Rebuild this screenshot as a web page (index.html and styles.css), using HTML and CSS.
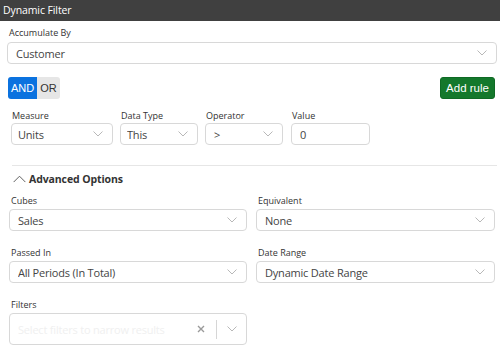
FILE: index.html
```html
<!DOCTYPE html>
<html lang="en">
<head>
    <meta charset="UTF-8">
    <title>Dynamic Filter</title>
    <link rel="stylesheet" href="styles.css">
</head>
<body>
    <div class="titlebar">Dynamic Filter</div>

    <div class="panel">
        <!-- Accumulate -->
        <div class="field">
            <label class="field-label">Accumulate By</label>
            <div class="select">
                <span>Customer</span>
                <svg class="chev" viewBox="0 0 10 6"><path d="M0.5 0.5 L5 5 L9.5 0.5"/></svg>
            </div>
        </div>

        <!-- Logic + add -->
        <div class="logic-row">
            <div class="toggle">
                <span class="toggle-btn active">AND</span>
                <span class="toggle-btn">OR</span>
            </div>
            <button class="add-btn">Add rule</button>
        </div>

        <!-- Rule -->
        <div class="rule-row">
            <div class="rule-field measure">
                <label class="field-label">Measure</label>
                <div class="select">
                    <span>Units</span>
                    <svg class="chev" viewBox="0 0 10 6"><path d="M0.5 0.5 L5 5 L9.5 0.5"/></svg>
                </div>
            </div>
            <div class="rule-field datatype">
                <label class="field-label">Data Type</label>
                <div class="select">
                    <span>This</span>
                    <svg class="chev" viewBox="0 0 10 6"><path d="M0.5 0.5 L5 5 L9.5 0.5"/></svg>
                </div>
            </div>
            <div class="rule-field operator">
                <label class="field-label">Operator</label>
                <div class="select">
                    <span>&gt;</span>
                    <svg class="chev" viewBox="0 0 10 6"><path d="M0.5 0.5 L5 5 L9.5 0.5"/></svg>
                </div>
            </div>
            <div class="rule-field value">
                <label class="field-label">Value</label>
                <div class="input">0</div>
            </div>
        </div>

        <hr class="divider">

        <div class="adv-title">
            <svg class="chev-up" viewBox="0 0 14 8"><path d="M0.7 7.3 L7 1 L13.3 7.3"/></svg>
            Advanced Options
        </div>

        <div class="adv-grid">
            <div class="field">
                <label class="field-label">Cubes</label>
                <div class="select">
                    <span>Sales</span>
                    <svg class="chev" viewBox="0 0 10 6"><path d="M0.5 0.5 L5 5 L9.5 0.5"/></svg>
                </div>
            </div>
            <div class="field">
                <label class="field-label">Equivalent</label>
                <div class="select">
                    <span>None</span>
                    <svg class="chev" viewBox="0 0 10 6"><path d="M0.5 0.5 L5 5 L9.5 0.5"/></svg>
                </div>
            </div>
            <div class="field">
                <label class="field-label">Passed In</label>
                <div class="select">
                    <span>All Periods (In Total)</span>
                    <svg class="chev" viewBox="0 0 10 6"><path d="M0.5 0.5 L5 5 L9.5 0.5"/></svg>
                </div>
            </div>
            <div class="field">
                <label class="field-label">Date Range</label>
                <div class="select">
                    <span>Dynamic Date Range</span>
                    <svg class="chev" viewBox="0 0 10 6"><path d="M0.5 0.5 L5 5 L9.5 0.5"/></svg>
                </div>
            </div>
            <div class="field">
                <label class="field-label">Filters</label>
                <div class="multi">
                    <span class="placeholder">Select filters to narrow results</span>
                    <svg class="clear" viewBox="0 0 8 8"><path d="M1 1 L7 7 M7 1 L1 7"/></svg>
                    <span class="sep"></span>
                    <svg class="chev" viewBox="0 0 10 6"><path d="M0.5 0.5 L5 5 L9.5 0.5"/></svg>
                </div>
            </div>
        </div>
    </div>
</body>
</html>
```

FILE: styles.css
```css
* {
    box-sizing: border-box;
    margin: 0;
    padding: 0;
}

body {
    font-family: 'Open Sans', sans-serif;
    background: #fff;
    color: #333;
    width: 500px;
    height: 351px;
    overflow: hidden;
}

.titlebar {
    height: 21px;
    line-height: 21px;
    background: #404040;
    color: #fff;
    font-size: 10.5px;
    padding-left: 3px;
    letter-spacing: -0.1px;
}

.panel {
    padding: 6px 3px 0 7px;
}

.field-label {
    display: block;
    font-size: 9px;
    line-height: 12px;
    color: #333;
    margin-bottom: 3px;
    padding-left: 2px;
}

.select,
.input,
.multi {
    display: flex;
    align-items: center;
    height: 22px;
    border: 1px solid #d8d8d8;
    border-radius: 4px;
    font-size: 11px;
    letter-spacing: -0.2px;
    color: #444;
    padding: 0 9px 0 8px;
    background: #fff;
}

.select span {
    flex: 1;
    white-space: nowrap;
    overflow: hidden;
}

.chev {
    width: 10px;
    height: 6px;
    fill: none;
    stroke: #b8b8b8;
    stroke-width: 1;
}

/* logic row */
.logic-row {
    display: flex;
    justify-content: space-between;
    align-items: center;
    margin-top: 13px;
    padding: 0 2px 0 1px;
}

.toggle {
    display: flex;
    height: 22px;
}

.toggle-btn {
    font-family: 'Liberation Sans', Arial, sans-serif;
    font-size: 11px;
    line-height: 22px;
    text-align: center;
    background: #e6e6e6;
    color: #333;
}

.toggle-btn.active {
    background: #0b72df;
    color: #fff;
    border-radius: 3px 0 0 3px;
    width: 29px;
}

.toggle-btn:last-child {
    border-radius: 0 3px 3px 0;
    width: 23px;
}

.add-btn {
    font-family: 'Liberation Sans', Arial, sans-serif;
    font-size: 11.5px;
    height: 22px;
    width: 55px;
    border: 1px solid #0f6a24;
    border-radius: 3px;
    background: #14782c;
    color: #fff;
}

/* rule row */
.rule-row {
    display: flex;
    gap: 7px;
    margin-top: 11px;
    padding-left: 4px;
}

.rule-field .field-label {
    margin-bottom: 1px;
    padding-left: 1px;
}

.rule-field .select {
    padding: 0 9px 0 6px;
}

.measure { width: 102px; }
.datatype { width: 78px; }
.operator { width: 78px; }
.operator .select { padding-left: 8px; }
.value { width: 79px; margin-left: 1px; }

.input {
    padding-left: 8px;
}

.divider {
    border: none;
    border-top: 1px solid #e6e6e6;
    margin: 20px 0 0 5px;
}

.adv-title {
    display: flex;
    align-items: center;
    gap: 3px;
    margin: 5px 0 0 6px;
    font-size: 10.5px;
    font-weight: 700;
    letter-spacing: -0.1px;
    color: #333;
    line-height: 16px;
}

.chev-up {
    width: 13px;
    height: 8px;
    fill: none;
    stroke: #555;
    stroke-width: 1;
}

/* advanced grid */
.adv-grid {
    display: grid;
    grid-template-columns: 238px 239px;
    column-gap: 9px;
    row-gap: 16px;
    margin: 8px 0 0 2px;
}

.adv-grid .field-label {
    margin-bottom: 2px;
}

.multi {
    height: 32px;
    padding: 0 9px 0 8px;
}

.placeholder {
    flex: 1;
    color: #f0f0f0;
    white-space: nowrap;
    overflow: hidden;
}

.clear {
    width: 8px;
    height: 8px;
    stroke: #9a9a9a;
    stroke-width: 1.4;
    margin-left: 6px;
}

.sep {
    width: 1px;
    height: 19px;
    background: #d6d6d6;
    margin: 0 10px 0 11px;
}
```
